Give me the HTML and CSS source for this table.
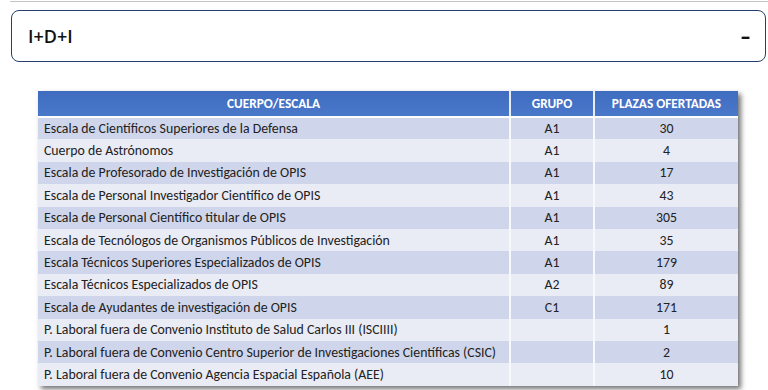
FILE: index.html
```html
<!DOCTYPE html>
<html lang="es">
<head>
<meta charset="utf-8">
<link rel="stylesheet" href="styles.css">
</head>
<body>
<div class="page">
  <div class="rule"></div>
  <div class="accordion">
    <span class="acc-title">I+D+I</span>
    <span class="acc-toggle">–</span>
  </div>
  <div class="table-wrap">
    <table class="plazas">
      <thead>
        <tr><th class="c1">CUERPO/ESCALA</th><th class="c2">GRUPO</th><th class="c3">PLAZAS OFERTADAS</th></tr>
      </thead>
      <tbody>
        <tr><td class="c1">Escala de Científicos Superiores de la Defensa</td><td class="c2">A1</td><td class="c3">30</td></tr>
        <tr><td class="c1">Cuerpo de Astrónomos</td><td class="c2">A1</td><td class="c3">4</td></tr>
        <tr><td class="c1">Escala de Profesorado de Investigación de OPIS</td><td class="c2">A1</td><td class="c3">17</td></tr>
        <tr><td class="c1">Escala de Personal Investigador Científico de OPIS</td><td class="c2">A1</td><td class="c3">43</td></tr>
        <tr><td class="c1">Escala de Personal Científico titular de OPIS</td><td class="c2">A1</td><td class="c3">305</td></tr>
        <tr><td class="c1">Escala de Tecnólogos de Organismos Públicos de Investigación</td><td class="c2">A1</td><td class="c3">35</td></tr>
        <tr><td class="c1">Escala Técnicos Superiores Especializados de OPIS</td><td class="c2">A1</td><td class="c3">179</td></tr>
        <tr><td class="c1">Escala Técnicos Especializados de OPIS</td><td class="c2">A2</td><td class="c3">89</td></tr>
        <tr><td class="c1">Escala de Ayudantes de investigación de OPIS</td><td class="c2">C1</td><td class="c3">171</td></tr>
        <tr><td class="c1">P. Laboral fuera de Convenio Instituto de Salud Carlos III (ISCIIII)</td><td class="c2"></td><td class="c3">1</td></tr>
        <tr><td class="c1">P. Laboral fuera de Convenio Centro Superior de Investigaciones Científicas (CSIC)</td><td class="c2"></td><td class="c3">2</td></tr>
        <tr><td class="c1">P. Laboral fuera de Convenio Agencia Espacial Española (AEE)</td><td class="c2"></td><td class="c3">10</td></tr>
      </tbody>
    </table>
  </div>
</div>
</body>
</html>
```
FILE: styles.css
```css
* { box-sizing: border-box; }
html, body { margin: 0; padding: 0; background: #ffffff; overflow: hidden; }
body { font-family: "Open Sans", "Noto Sans", sans-serif; color: #1a1a1a; }

.page {
  width: 768px;
  height: 390px;
  padding-top: 1px;
}

.rule {
  margin-left: 10px;
  border-top: 1px solid #c4c4c4;
  height: 0;
}

.accordion {
  margin: 8px 2px 0 11px;
  height: 52px;
  border: 1.5px solid #25406e;
  border-radius: 8px;
  display: flex;
  align-items: center;
  justify-content: space-between;
  padding: 0 15px 0 16px;
}

.acc-title {
  font-family: "Open Sans", sans-serif;
  font-size: 18px;
  font-weight: 600;
  color: #111;
}

.acc-toggle {
  font-size: 18px;
  font-weight: 800;
  color: #111;
}

.table-wrap {
  margin: 29px 0 0 38px;
  width: 700px;
  box-shadow: 3px 3px 5px rgba(0, 0, 0, 0.55);
}

.plazas {
  width: 700px;
  border-collapse: collapse;
  table-layout: fixed;
  font-family: "Carlito", "Lato", sans-serif;
  font-size: 13.8px;
}

.plazas .c1 { width: 472px; }
.plazas .c2 { width: 84px; text-align: center; }
.plazas .c3 { width: 144px; text-align: center; }

.plazas th {
  height: 26px;
  background: linear-gradient(#3f6cc0, #4a78c9);
  color: #fff;
  font-weight: 700;
  font-size: 13.3px;
  border-bottom: 2px solid #ffffff;
  border-left: 2px solid #e8ecf6;
  padding: 0;
}
.plazas th:first-child { border-left: none; }

.plazas td {
  height: 22.4px;
  padding: 0;
  border-left: 2px solid #f7f8fc;
  color: #222222;
  white-space: nowrap;
}
.plazas td:first-child { border-left: none; padding-left: 6px; text-align: left; }

.plazas tbody tr:nth-child(odd) td { background: #cfd5ea; }
.plazas tbody tr:nth-child(even) td { background: #e9ebf5; }
```
